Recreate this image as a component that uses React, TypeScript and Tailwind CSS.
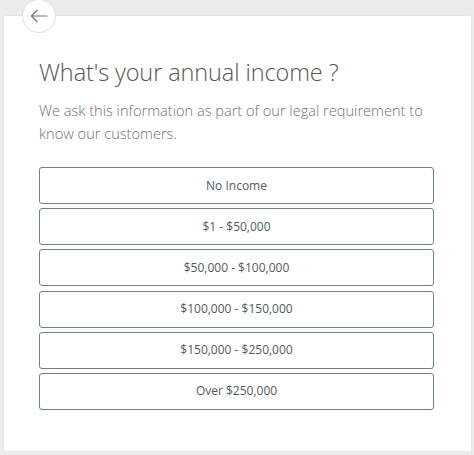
import React from 'react';

// Income options shown as a vertical list of outlined buttons
const options = ['No Income', '$1 - $50,000', '$50,000 - $100,000', '$100,000 - $150,000', '$150,000 - $250,000', 'Over $250,000'];

export default function App() {
    return (
        <div className="w-[474px] h-[455px] bg-[#ececec] pt-[16px] pl-[4px] pr-[3px] overflow-hidden" style={{ fontFamily: '"Open Sans", sans-serif' }}>
            <div className="relative bg-white h-[435px] shadow-[0_0_2px_rgba(0,0,0,0.08)] pl-[35px] pr-[37px]">
                {/* Back button */}
                <button className="absolute left-[18px] top-[-17px] w-[34px] h-[34px] rounded-full bg-white border border-[#dedede] flex items-center justify-center">
                    <svg width="18" height="14" viewBox="0 0 18 14" fill="none" stroke="#6b7378" strokeWidth="1.2" strokeLinecap="round" strokeLinejoin="round">
                        <path d="M17 7H1.5" />
                        <path d="M7 1.5L1.5 7L7 12.5" />
                    </svg>
                </button>

                <h1 className="pt-[41px] text-[23.5px] font-light text-[#555] leading-[30px] tracking-[-0.1px]">What's your annual income ?</h1>
                <p className="mt-[12px] text-[14.6px] font-light text-[#6f6f6f] leading-[23px]">
                    We ask this information as part of our legal requirement to know our customers.
                </p>

                <div className="mt-[22px] flex flex-col gap-[4.2px]">
                    {options.map((o) => (
                        <button key={o} className="h-[37px] w-full border-[1.5px] border-[#6f7f84] rounded-[3px] bg-white text-[12px] text-[#4f5b5f] font-medium">
                            {o}
                        </button>
                    ))}
                </div>
            </div>
        </div>
    );
}
